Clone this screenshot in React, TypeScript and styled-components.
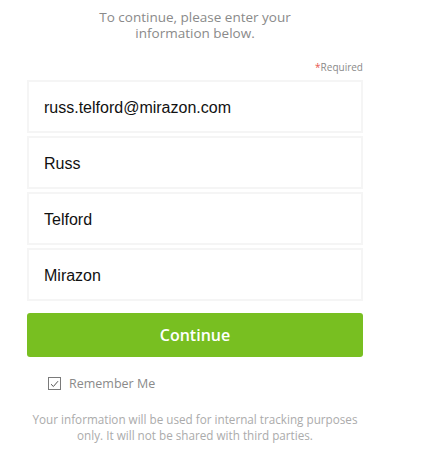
import React from "react";
import styled, { createGlobalStyle } from "styled-components";

const Global = createGlobalStyle`
  html, body { margin: 0; padding: 0; background: #ffffff; }
  body { font-family: "Open Sans", "Noto Sans", sans-serif; }
`;

const Page = styled.div`
  width: 336px;
  margin-left: 27px;
  padding-top: 10px;
  display: flex;
  flex-direction: column;
`;

const Intro = styled.p`
  margin: 0 auto;
  width: 210px;
  text-align: center;
  font-size: 13.5px;
  line-height: 15.5px;
  color: #8a8a8a;
`;

const RequiredNote = styled.div`
  margin-top: 20px;
  text-align: right;
  font-size: 10px;
  line-height: 12px;
  color: #8a8a8a;
`;

const Star = styled.span`
  color: #e8574f;
`;

const Fields = styled.div`
  margin-top: 7px;
  display: flex;
  flex-direction: column;
  gap: 3px;
`;

const Field = styled.input`
  box-sizing: border-box;
  width: 100%;
  height: 53px;
  border: 2px solid #f5f5f5;
  background: #ffffff;
  padding: 3px 0 0 15px;
  font-family: "Liberation Sans", Arial, sans-serif;
  font-size: 16px;
  color: #111111;
  outline: none;
`;

const Button = styled.button`
  margin-top: 12px;
  height: 44px;
  width: 100%;
  border: none;
  border-radius: 3px;
  background: #78bf21;
  color: #ffffff;
  font-family: "Open Sans", "Noto Sans", sans-serif;
  font-size: 16px;
  font-weight: 600;
  cursor: pointer;
`;

const Remember = styled.label`
  margin-top: 18px;
  margin-left: 21px;
  display: flex;
  align-items: center;
  gap: 8px;
  font-size: 12.5px;
  color: #8a8a8a;
`;

const Box = styled.span`
  box-sizing: border-box;
  width: 13px;
  height: 13px;
  border: 1px solid #7a7a7a;
  display: flex;
  align-items: center;
  justify-content: center;
`;

const Footer = styled.p`
  margin: 19px 0 0;
  text-align: center;
  font-size: 11.7px;
  line-height: 16px;
  color: #ababab;
`;

export default function App() {
  return (
    <>
      <Global />
      <Page>
        <Intro>To continue, please enter your information below.</Intro>
        <RequiredNote>
          <Star>*</Star>Required
        </RequiredNote>
        <Fields>
          <Field defaultValue="russ.telford@mirazon.com" />
          <Field defaultValue="Russ" />
          <Field defaultValue="Telford" />
          <Field defaultValue="Mirazon" />
        </Fields>
        <Button>Continue</Button>
        <Remember>
          <Box>
            <svg width="9" height="8" viewBox="0 0 9 8">
              <path d="M1 4.2 L3.4 6.5 L8 1.2" fill="none" stroke="#555" strokeWidth="1" />
            </svg>
          </Box>
          Remember Me
        </Remember>
        <Footer>
          Your information will be used for internal tracking purposes only. It will not be shared with third parties.
        </Footer>
      </Page>
    </>
  );
}
